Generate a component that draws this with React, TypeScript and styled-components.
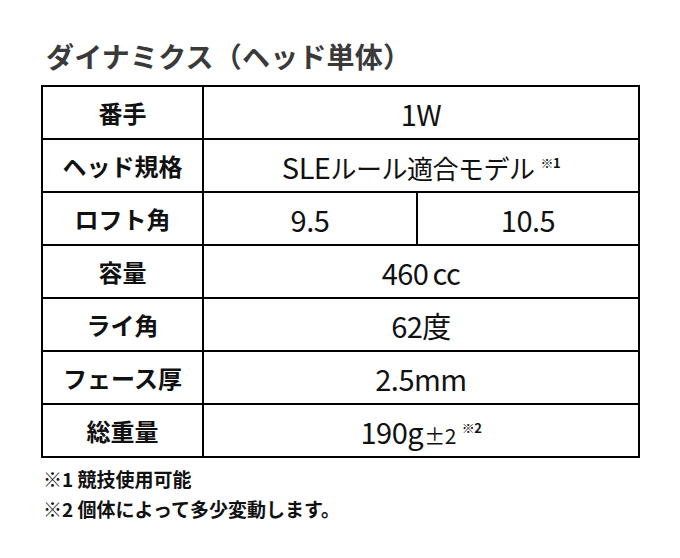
import React from 'react';
import styled, { createGlobalStyle } from 'styled-components';

const GlobalStyle = createGlobalStyle`
  html, body {
    margin: 0;
    padding: 0;
    background: #fff;
  }
  body {
    font-family: "Noto Sans CJK JP", "Noto Sans", sans-serif;
    color: #111;
  }
`;

const Page = styled.div`
  width: 680px;
  height: 558px;
  padding: 35px 0 0 41px;
  box-sizing: border-box;
`;

const Title = styled.h1`
  margin: 0 0 8px 5px;
  font-size: 28px;
  line-height: 42px;
  font-weight: 700;
  color: #3a3a3a;
  letter-spacing: 0.2px;
`;

const SpecTable = styled.table`
  width: 599px;
  border-collapse: collapse;
  table-layout: fixed;
  border: 2px solid #000;

  td {
    border: 2px solid #000;
    height: 53px;
    padding: 0;
    text-align: center;
    vertical-align: middle;
    box-sizing: border-box;
  }
`;

const LabelCell = styled.td`
  font-size: 24px;
  font-weight: 700;
  color: #111;
`;

const ValueCell = styled.td<{ $small?: boolean }>`
  font-size: ${(p) => (p.$small ? '26px' : '29px')};
  font-weight: 400;
  color: #111;
  letter-spacing: -0.5px;
`;

const Latin = styled.span`
  font-size: 29px;
`;

const Note = styled.span`
  font-size: 13px;
  vertical-align: 11px;
  margin-left: 6px;
  font-weight: 700;
`;

const Unit = styled.span`
  margin-left: 4px;
`;

const Tolerance = styled.span`
  font-size: 21px;
  margin-left: 1px;
`;

const Footnotes = styled.ul`
  list-style: none;
  margin: 6px 0 0 2px;
  padding: 0;
  font-size: 19px;
  font-weight: 700;
  line-height: 30px;
  color: #111;
`;

type SpecRow = {
  label: string;
  values: React.ReactNode[];
  small?: boolean;
};

const rows: SpecRow[] = [
  { label: '番手', values: ['1W'] },
  {
    label: 'ヘッド規格',
    small: true,
    values: [
      <>
        <Latin>SLE</Latin>ルール適合モデル<Note>※1</Note>
      </>,
    ],
  },
  { label: 'ロフト角', values: ['9.5', '10.5'] },
  {
    label: '容量',
    values: [
      <>
        460<Unit>cc</Unit>
      </>,
    ],
  },
  { label: 'ライ角', values: ['62度'] },
  { label: 'フェース厚', values: ['2.5mm'] },
  {
    label: '総重量',
    values: [
      <>
        190g<Tolerance>±2</Tolerance>
        <Note>※2</Note>
      </>,
    ],
  },
];

const App: React.FC = () => {
  return (
    <>
      <GlobalStyle />
      <Page>
        <Title>ダイナミクス（ヘッド単体）</Title>
        <SpecTable>
          <colgroup>
            <col style={{ width: 161 }} />
            <col style={{ width: 214 }} />
            <col />
          </colgroup>
          <tbody>
            {rows.map((row) => (
              <tr key={row.label}>
                <LabelCell>{row.label}</LabelCell>
                {row.values.map((value, i) => (
                  <ValueCell
                    key={i}
                    $small={row.small}
                    colSpan={row.values.length === 1 ? 2 : 1}
                  >
                    {value}
                  </ValueCell>
                ))}
              </tr>
            ))}
          </tbody>
        </SpecTable>
        <Footnotes>
          <li>※1 競技使用可能</li>
          <li>※2 個体によって多少変動します。</li>
        </Footnotes>
      </Page>
    </>
  );
};

export default App;
